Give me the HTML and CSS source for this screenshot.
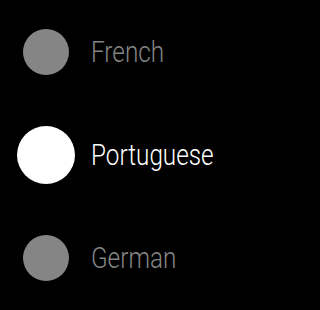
FILE: index.html
```html
<!DOCTYPE html>
<html>
<head>
<meta charset="utf-8">
<link rel="stylesheet" href="styles.css">
</head>
<body>
<ul class="list">
  <li class="row">
    <span class="dot"></span>
    <span class="label">French</span>
  </li>
  <li class="row row-active">
    <span class="dot"></span>
    <span class="label">Portuguese</span>
  </li>
  <li class="row">
    <span class="dot"></span>
    <span class="label">German</span>
  </li>
</ul>
</body>
</html>
```
FILE: styles.css
```css
html, body {
  margin: 0;
  padding: 0;
  background: #000;
}
body {
  width: 310px;
  height: 310px;
  overflow: hidden;
  font-family: Roboto, "Liberation Sans", sans-serif;
}
.list {
  list-style: none;
  margin: 0;
  padding: 0;
}
.row {
  height: 103px;
  display: flex;
  align-items: center;
  padding-left: 23px;
  gap: 22px;
}
.dot {
  width: 46px;
  height: 46px;
  border-radius: 50%;
  background: #858585;
  flex: none;
}
.label {
  font-size: 30px;
  font-weight: 300;
  line-height: 30px;
  padding-top: 1px;
  color: #858585;
  transform: scaleX(0.81);
  transform-origin: left center;
  white-space: nowrap;
}
.row-active .dot {
  width: 58px;
  height: 58px;
  margin: 0 -6px;
  background: #fff;
}
.row-active .label {
  color: #fff;
}
```
